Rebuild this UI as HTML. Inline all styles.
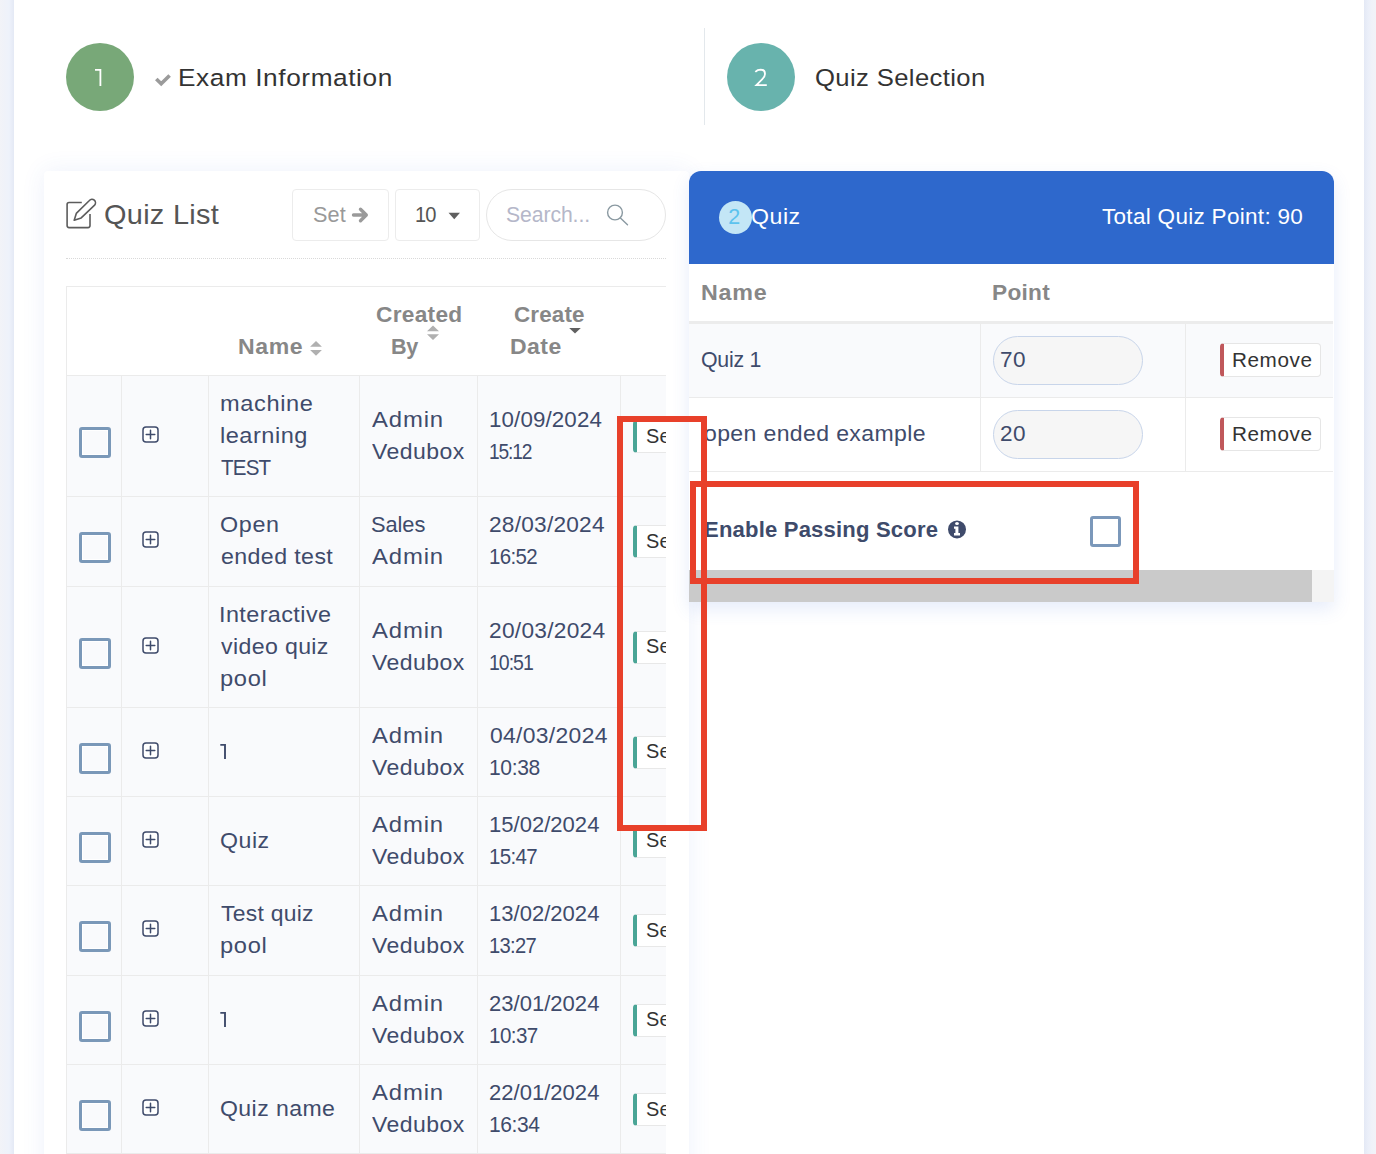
<!DOCTYPE html>
<html><head><meta charset="utf-8"><style>
html,body{margin:0;padding:0}
body{width:1376px;height:1154px;position:relative;overflow:hidden;background:#edf0f8;font-family:"Liberation Sans",sans-serif}
.t{position:absolute;white-space:nowrap;transform-origin:0 0}
</style></head><body>
<div style="position:absolute;left:14px;top:0;width:1350px;height:1154px;background:#fff"></div>
<div style="position:absolute;left:1364px;top:0;width:12px;height:1154px;background:linear-gradient(90deg,#e4e9f5 0px,#ebeff9 4px,#f0f2f9 8px,#f2f3f8 12px)"></div>
<div style="position:absolute;left:0;top:0;width:14px;height:1154px;background:linear-gradient(90deg,#f2f3f8 0px,#f0f2f9 4px,#eef2fb 9px,#e4e9f5 14px)"></div>
<div style="position:absolute;left:66px;top:43px;width:68px;height:68px;border-radius:50%;background:#78a878"></div>
<div style="position:absolute;left:727px;top:43px;width:68px;height:68px;border-radius:50%;background:#68b3ad"></div>
<div style="position:absolute;left:704px;top:28px;width:1px;height:97px;background:#e3e8ec"></div>
<svg style="position:absolute;left:90px;top:64px" width="20" height="26" viewBox="90 64 20 26"><path d="M95 69.9 H100.4 V86" fill="none" stroke="#fff" stroke-width="1.8"/></svg>
<svg style="position:absolute;left:750px;top:64px" width="20" height="26" viewBox="750 64 20 26"><path d="M755.3 71.8 Q757.6 69.6 760.6 69.6 Q765 69.7 765 73.9 Q765 76.6 762.1 79.4 L756.4 85.1 H766.8" fill="none" stroke="#fff" stroke-width="1.8" stroke-linejoin="miter"/></svg>
<svg style="position:absolute;left:150px;top:68px" width="26" height="24" viewBox="150 68 26 24"><polyline points="156.3,78.9 161.2,83.8 169.6,75.4" fill="none" stroke="#9b9b9b" stroke-width="3.6"/></svg>
<div style="position:absolute;left:44px;top:171px;width:645px;height:1100px;background:#fff;border-radius:4px;box-shadow:0 0 24px rgba(60,105,215,0.09)"></div>
<svg style="position:absolute;left:60px;top:194px" width="40" height="40" viewBox="0 0 40 40"><path d="M21.8 8.5 H9.1 Q7.1 8.5 7.1 10.5 V31.6 Q7.1 33.6 9.1 33.6 H28 Q30 33.6 30 31.6 V20.1" fill="none" stroke="#5c5c5c" stroke-width="1.6"/><path d="M14.2 26.3 L16.3 19.4 L29.4 6.5 A3.1 3.1 0 0 1 34.6 11.1 L21.2 23.9 Z" fill="none" stroke="#5c5c5c" stroke-width="1.6" stroke-linejoin="round"/></svg>
<div style="position:absolute;left:292px;top:189px;width:95px;height:50px;border:1px solid #ececec;border-radius:4px;background:#fff"></div>
<svg style="position:absolute;left:351px;top:205px" width="20" height="20" viewBox="0 0 20 20"><path d="M2.5 10 H14.5 M9.5 4.2 L15.3 10 L9.5 15.8" fill="none" stroke="#9a9a9a" stroke-width="3.4" stroke-linecap="round" stroke-linejoin="round"/></svg>
<div style="position:absolute;left:395px;top:189px;width:83px;height:50px;border:1px solid #ececec;border-radius:4px;background:#fff"></div>
<svg style="position:absolute;left:446px;top:210px" width="16" height="12" viewBox="446 210 16 12"><path d="M448.5 212.7 H460 L454.25 219.2 Z" fill="#5f5f5f"/></svg>
<div style="position:absolute;left:486px;top:189px;width:178px;height:50px;border:1px solid #e6e6e6;border-radius:26px;background:#fff"></div>
<svg style="position:absolute;left:600px;top:198px" width="34" height="34" viewBox="600 198 34 34"><circle cx="615" cy="212.5" r="7.4" fill="none" stroke="#8a99a1" stroke-width="1.4"/><path d="M620.4 218 L627.5 224.8" stroke="#8a99a1" stroke-width="1.4" stroke-linecap="round"/></svg>
<div style="position:absolute;left:66px;top:258px;width:600px;height:0;border-top:1px dotted #d9d9d9"></div>
<div style="position:absolute;left:66px;top:286px;width:600px;height:900px;overflow:hidden">
<div style="position:absolute;left:0;top:0;width:700px;height:90px;background:#fff;border-top:1px solid #ebebeb;border-left:1px solid #ebebeb;box-sizing:border-box"></div>
<div style="position:absolute;left:0;top:89px;width:700px;height:121px;background:#f9fafc;border-top:1px solid #ebebeb;border-left:1px solid #ebebeb;box-sizing:border-box"></div>
<div style="position:absolute;left:0;top:210px;width:700px;height:90px;background:#f9fafc;border-top:1px solid #ebebeb;border-left:1px solid #ebebeb;box-sizing:border-box"></div>
<div style="position:absolute;left:0;top:300px;width:700px;height:121px;background:#f9fafc;border-top:1px solid #ebebeb;border-left:1px solid #ebebeb;box-sizing:border-box"></div>
<div style="position:absolute;left:0;top:421px;width:700px;height:89px;background:#f9fafc;border-top:1px solid #ebebeb;border-left:1px solid #ebebeb;box-sizing:border-box"></div>
<div style="position:absolute;left:0;top:510px;width:700px;height:89px;background:#f9fafc;border-top:1px solid #ebebeb;border-left:1px solid #ebebeb;box-sizing:border-box"></div>
<div style="position:absolute;left:0;top:599px;width:700px;height:90px;background:#f9fafc;border-top:1px solid #ebebeb;border-left:1px solid #ebebeb;box-sizing:border-box"></div>
<div style="position:absolute;left:0;top:689px;width:700px;height:89px;background:#f9fafc;border-top:1px solid #ebebeb;border-left:1px solid #ebebeb;box-sizing:border-box"></div>
<div style="position:absolute;left:0;top:778px;width:700px;height:90px;background:#f9fafc;border-top:1px solid #ebebeb;border-left:1px solid #ebebeb;box-sizing:border-box"></div>
<div style="position:absolute;left:0;top:867px;width:700px;height:1px;background:#ebebeb"></div>
<div style="position:absolute;left:55px;top:89px;width:1px;height:800px;background:#ebebeb"></div>
<div style="position:absolute;left:142px;top:89px;width:1px;height:800px;background:#ebebeb"></div>
<div style="position:absolute;left:293px;top:89px;width:1px;height:800px;background:#ebebeb"></div>
<div style="position:absolute;left:411px;top:89px;width:1px;height:800px;background:#ebebeb"></div>
<div style="position:absolute;left:554px;top:89px;width:1px;height:800px;background:#ebebeb"></div>
<div style="position:absolute;left:13px;top:141.0px;width:32px;height:31px;box-sizing:border-box;border:3px solid #7a98b8;border-radius:3px;background:transparent;box-shadow:inset 0 0 0 1px #fff"></div>
<svg style="position:absolute;left:75px;top:139.10000000000002px" width="19" height="19" viewBox="0 0 19 19"><rect x="2" y="2" width="15" height="15" rx="3" fill="#fff" stroke="#3f4b6b" stroke-width="1.5"/><path d="M9.5 5.2 V13.8 M5.2 9.5 H13.8" stroke="#3f4b6b" stroke-width="1.5" stroke-linecap="round"/></svg>
<div style="position:absolute;left:567px;top:134.0px;width:80px;height:33px;box-sizing:border-box;border:1px solid #e8e8e8;border-left:4px solid #4aa596;border-radius:4px;background:#fff"></div>
<div style="position:absolute;left:13px;top:246.0px;width:32px;height:31px;box-sizing:border-box;border:3px solid #7a98b8;border-radius:3px;background:transparent;box-shadow:inset 0 0 0 1px #fff"></div>
<svg style="position:absolute;left:75px;top:244.10000000000002px" width="19" height="19" viewBox="0 0 19 19"><rect x="2" y="2" width="15" height="15" rx="3" fill="#fff" stroke="#3f4b6b" stroke-width="1.5"/><path d="M9.5 5.2 V13.8 M5.2 9.5 H13.8" stroke="#3f4b6b" stroke-width="1.5" stroke-linecap="round"/></svg>
<div style="position:absolute;left:567px;top:239.0px;width:80px;height:33px;box-sizing:border-box;border:1px solid #e8e8e8;border-left:4px solid #4aa596;border-radius:4px;background:#fff"></div>
<div style="position:absolute;left:13px;top:351.5px;width:32px;height:31px;box-sizing:border-box;border:3px solid #7a98b8;border-radius:3px;background:transparent;box-shadow:inset 0 0 0 1px #fff"></div>
<svg style="position:absolute;left:75px;top:349.6px" width="19" height="19" viewBox="0 0 19 19"><rect x="2" y="2" width="15" height="15" rx="3" fill="#fff" stroke="#3f4b6b" stroke-width="1.5"/><path d="M9.5 5.2 V13.8 M5.2 9.5 H13.8" stroke="#3f4b6b" stroke-width="1.5" stroke-linecap="round"/></svg>
<div style="position:absolute;left:567px;top:344.5px;width:80px;height:33px;box-sizing:border-box;border:1px solid #e8e8e8;border-left:4px solid #4aa596;border-radius:4px;background:#fff"></div>
<div style="position:absolute;left:13px;top:456.5px;width:32px;height:31px;box-sizing:border-box;border:3px solid #7a98b8;border-radius:3px;background:transparent;box-shadow:inset 0 0 0 1px #fff"></div>
<svg style="position:absolute;left:75px;top:454.6px" width="19" height="19" viewBox="0 0 19 19"><rect x="2" y="2" width="15" height="15" rx="3" fill="#fff" stroke="#3f4b6b" stroke-width="1.5"/><path d="M9.5 5.2 V13.8 M5.2 9.5 H13.8" stroke="#3f4b6b" stroke-width="1.5" stroke-linecap="round"/></svg>
<div style="position:absolute;left:567px;top:449.5px;width:80px;height:33px;box-sizing:border-box;border:1px solid #e8e8e8;border-left:4px solid #4aa596;border-radius:4px;background:#fff"></div>
<div style="position:absolute;left:13px;top:545.5px;width:32px;height:31px;box-sizing:border-box;border:3px solid #7a98b8;border-radius:3px;background:transparent;box-shadow:inset 0 0 0 1px #fff"></div>
<svg style="position:absolute;left:75px;top:543.6px" width="19" height="19" viewBox="0 0 19 19"><rect x="2" y="2" width="15" height="15" rx="3" fill="#fff" stroke="#3f4b6b" stroke-width="1.5"/><path d="M9.5 5.2 V13.8 M5.2 9.5 H13.8" stroke="#3f4b6b" stroke-width="1.5" stroke-linecap="round"/></svg>
<div style="position:absolute;left:567px;top:538.5px;width:80px;height:33px;box-sizing:border-box;border:1px solid #e8e8e8;border-left:4px solid #4aa596;border-radius:4px;background:#fff"></div>
<div style="position:absolute;left:13px;top:635.0px;width:32px;height:31px;box-sizing:border-box;border:3px solid #7a98b8;border-radius:3px;background:transparent;box-shadow:inset 0 0 0 1px #fff"></div>
<svg style="position:absolute;left:75px;top:633.1px" width="19" height="19" viewBox="0 0 19 19"><rect x="2" y="2" width="15" height="15" rx="3" fill="#fff" stroke="#3f4b6b" stroke-width="1.5"/><path d="M9.5 5.2 V13.8 M5.2 9.5 H13.8" stroke="#3f4b6b" stroke-width="1.5" stroke-linecap="round"/></svg>
<div style="position:absolute;left:567px;top:628.0px;width:80px;height:33px;box-sizing:border-box;border:1px solid #e8e8e8;border-left:4px solid #4aa596;border-radius:4px;background:#fff"></div>
<div style="position:absolute;left:13px;top:724.5px;width:32px;height:31px;box-sizing:border-box;border:3px solid #7a98b8;border-radius:3px;background:transparent;box-shadow:inset 0 0 0 1px #fff"></div>
<svg style="position:absolute;left:75px;top:722.6px" width="19" height="19" viewBox="0 0 19 19"><rect x="2" y="2" width="15" height="15" rx="3" fill="#fff" stroke="#3f4b6b" stroke-width="1.5"/><path d="M9.5 5.2 V13.8 M5.2 9.5 H13.8" stroke="#3f4b6b" stroke-width="1.5" stroke-linecap="round"/></svg>
<div style="position:absolute;left:567px;top:717.5px;width:80px;height:33px;box-sizing:border-box;border:1px solid #e8e8e8;border-left:4px solid #4aa596;border-radius:4px;background:#fff"></div>
<div style="position:absolute;left:13px;top:814.0px;width:32px;height:31px;box-sizing:border-box;border:3px solid #7a98b8;border-radius:3px;background:transparent;box-shadow:inset 0 0 0 1px #fff"></div>
<svg style="position:absolute;left:75px;top:812.0999999999999px" width="19" height="19" viewBox="0 0 19 19"><rect x="2" y="2" width="15" height="15" rx="3" fill="#fff" stroke="#3f4b6b" stroke-width="1.5"/><path d="M9.5 5.2 V13.8 M5.2 9.5 H13.8" stroke="#3f4b6b" stroke-width="1.5" stroke-linecap="round"/></svg>
<div style="position:absolute;left:567px;top:807.0px;width:80px;height:33px;box-sizing:border-box;border:1px solid #e8e8e8;border-left:4px solid #4aa596;border-radius:4px;background:#fff"></div>
<svg style="position:absolute;left:234px;top:44px" width="30" height="40" viewBox="300 330 30 40"><path d="M310.1 346.8 H321.9 L316 341.1 Z M310.1 350.1 H321.9 L316 355.8 Z" fill="#b0b0b0"/></svg>
<svg style="position:absolute;left:354px;top:34px" width="30" height="30" viewBox="420 320 30 30"><path d="M427 331.2 H439 L433 325.5 Z M427 334.3 H439 L433 340 Z" fill="#b0b0b0"/></svg>
<svg style="position:absolute;left:494px;top:34px" width="30" height="20" viewBox="560 320 30 20"><path d="M569.2 328.1 H580.8 L575 333.6 Z" fill="#606060"/></svg>
<div style="position:absolute;left:-66px;top:-286px;width:1376px;height:1154px">
<div class="t" style="left:645.80px;top:427.00px;font-size:19.5px;line-height:19.5px;font-weight:400;color:#333;letter-spacing:0.31px;transform:scaleX(1.0209)">Se</div>
<div class="t" style="left:645.80px;top:532.00px;font-size:19.5px;line-height:19.5px;font-weight:400;color:#333;letter-spacing:0.31px;transform:scaleX(1.0209)">Se</div>
<div class="t" style="left:645.80px;top:637.00px;font-size:19.5px;line-height:19.5px;font-weight:400;color:#333;letter-spacing:0.31px;transform:scaleX(1.0209)">Se</div>
<div class="t" style="left:645.80px;top:742.00px;font-size:19.5px;line-height:19.5px;font-weight:400;color:#333;letter-spacing:0.31px;transform:scaleX(1.0209)">Se</div>
<div class="t" style="left:645.80px;top:831.00px;font-size:19.5px;line-height:19.5px;font-weight:400;color:#333;letter-spacing:0.31px;transform:scaleX(1.0209)">Se</div>
<div class="t" style="left:645.80px;top:921.00px;font-size:19.5px;line-height:19.5px;font-weight:400;color:#333;letter-spacing:0.31px;transform:scaleX(1.0209)">Se</div>
<div class="t" style="left:645.80px;top:1010.00px;font-size:19.5px;line-height:19.5px;font-weight:400;color:#333;letter-spacing:0.31px;transform:scaleX(1.0209)">Se</div>
<div class="t" style="left:645.80px;top:1100.00px;font-size:19.5px;line-height:19.5px;font-weight:400;color:#333;letter-spacing:0.31px;transform:scaleX(1.0209)">Se</div>
</div>
</div>
<div style="position:absolute;left:689px;top:171px;width:645px;height:431px;background:#fff;border-radius:12px 12px 0 0;box-shadow:0 7px 18px rgba(60,105,215,0.13)"></div>
<div style="position:absolute;left:689px;top:171px;width:645px;height:93px;background:#2e68cc;border-radius:12px 12px 0 0"></div>
<div style="position:absolute;left:719px;top:201px;width:33px;height:33px;border-radius:50%;background:#c3e6f6"></div>
<div style="position:absolute;left:689px;top:321px;width:644px;height:3px;background:#ececec"></div>
<div style="position:absolute;left:689px;top:324px;width:644px;height:74px;background:#f9fafc;border-bottom:1px solid #ebebeb;box-sizing:border-box"></div>
<div style="position:absolute;left:689px;top:398px;width:644px;height:73.5px;background:#fff;border-bottom:1px solid #ebebeb;box-sizing:border-box"></div>
<div style="position:absolute;left:980px;top:324px;width:1px;height:147px;background:#ebebeb"></div>
<div style="position:absolute;left:1185px;top:324px;width:1px;height:147px;background:#ebebeb"></div>
<div style="position:absolute;left:993px;top:336px;width:150px;height:49px;box-sizing:border-box;border:1px solid #c8d5ea;border-radius:25px;background:#f6f6f6"></div>
<div style="position:absolute;left:993px;top:410px;width:150px;height:49px;box-sizing:border-box;border:1px solid #c8d5ea;border-radius:25px;background:#f6f6f6"></div>
<div style="position:absolute;left:1220px;top:343.3px;width:101px;height:34px;box-sizing:border-box;border:1px solid #e6e6e6;border-left:4px solid #c0585b;border-radius:4px;background:#fff"></div>
<div style="position:absolute;left:1220px;top:417.3px;width:101px;height:34px;box-sizing:border-box;border:1px solid #e6e6e6;border-left:4px solid #c0585b;border-radius:4px;background:#fff"></div>
<div style="position:absolute;left:1090px;top:516px;width:31px;height:31px;box-sizing:border-box;border:3px solid #7b98ba;border-radius:3px;background:#fff"></div>
<svg style="position:absolute;left:946px;top:518px" width="22" height="22" viewBox="946 518 22 22"><circle cx="957" cy="529.4" r="9" fill="#3f4b6b"/><ellipse cx="957" cy="523.5" rx="1.9" ry="1.5" fill="#fff"/><path d="M954 526.4 H958.4 V533 H960 V535.6 H954 V533 H955.4 V528.8 H954 Z" fill="#fff"/></svg>
<div style="position:absolute;left:689px;top:570px;width:623px;height:32px;background:#cacaca"></div>
<div style="position:absolute;left:1312px;top:570px;width:22px;height:32px;background:#f4f4f4"></div>
<div class="t" style="left:177.86px;top:66.00px;font-size:24.5px;line-height:24.5px;font-weight:400;color:#333;letter-spacing:0.55px;transform:scaleX(1.0701)">Exam Information</div>
<div class="t" style="left:815.15px;top:66.00px;font-size:24.5px;line-height:24.5px;font-weight:400;color:#333;letter-spacing:0.36px;transform:scaleX(1.0466)">Quiz Selection</div>
<div class="t" style="left:103.57px;top:201.00px;font-size:28px;line-height:28px;font-weight:400;color:#555;letter-spacing:0.28px;transform:scaleX(1.0325)">Quiz List</div>
<div class="t" style="left:313.30px;top:205.00px;font-size:21.5px;line-height:21.5px;font-weight:400;color:#999;letter-spacing:0.08px;transform:scaleX(1.0075)">Set</div>
<div class="t" style="left:414.87px;top:205.00px;font-size:21.5px;line-height:21.5px;font-weight:400;color:#555;letter-spacing:-1.10px;transform:scaleX(0.9332)">10</div>
<div class="t" style="left:505.90px;top:205.00px;font-size:21.5px;line-height:21.5px;font-weight:400;color:#b5b7c9;letter-spacing:-0.10px;transform:scaleX(0.9861)">Search...</div>
<div class="t" style="left:237.55px;top:336.00px;font-size:22px;line-height:22px;font-weight:700;color:#878787;letter-spacing:0.60px;transform:scaleX(1.0482)">Name</div>
<div class="t" style="left:375.60px;top:304.00px;font-size:22px;line-height:22px;font-weight:700;color:#878787;letter-spacing:0.27px;transform:scaleX(1.0314)">Created</div>
<div class="t" style="left:390.62px;top:336.00px;font-size:22px;line-height:22px;font-weight:700;color:#878787;letter-spacing:-0.36px;transform:scaleX(0.9809)">By</div>
<div class="t" style="left:513.70px;top:304.00px;font-size:22px;line-height:22px;font-weight:700;color:#878787;letter-spacing:0.16px;transform:scaleX(1.0181)">Create</div>
<div class="t" style="left:509.66px;top:336.00px;font-size:22px;line-height:22px;font-weight:700;color:#878787;letter-spacing:0.44px;transform:scaleX(1.0446)">Date</div>
<div class="t" style="left:220.23px;top:393.00px;font-size:22px;line-height:22px;font-weight:400;color:#3f4b6b;letter-spacing:0.60px;transform:scaleX(1.0709)">machine</div>
<div class="t" style="left:220.23px;top:425.00px;font-size:22px;line-height:22px;font-weight:400;color:#3f4b6b;letter-spacing:0.48px;transform:scaleX(1.0707)">learning</div>
<div class="t" style="left:221.30px;top:457.00px;font-size:22px;line-height:22px;font-weight:400;color:#3f4b6b;letter-spacing:-0.87px;transform:scaleX(0.9345)">TEST</div>
<div class="t" style="left:372.20px;top:409.00px;font-size:22px;line-height:22px;font-weight:400;color:#3f4b6b;letter-spacing:0.80px;transform:scaleX(1.0852)">Admin</div>
<div class="t" style="left:372.20px;top:441.00px;font-size:22px;line-height:22px;font-weight:400;color:#3f4b6b;letter-spacing:0.42px;transform:scaleX(1.0460)">Vedubox</div>
<div class="t" style="left:489.18px;top:409.00px;font-size:22px;line-height:22px;font-weight:400;color:#3f4b6b;letter-spacing:0.12px;transform:scaleX(1.0150)">10/09/2024</div>
<div class="t" style="left:489.33px;top:441.00px;font-size:22px;line-height:22px;font-weight:400;color:#3f4b6b;letter-spacing:-1.33px;transform:scaleX(0.8705)">15:12</div>
<div class="t" style="left:220.24px;top:514.00px;font-size:22px;line-height:22px;font-weight:400;color:#3f4b6b;letter-spacing:0.64px;transform:scaleX(1.0595)">Open</div>
<div class="t" style="left:221.30px;top:546.00px;font-size:22px;line-height:22px;font-weight:400;color:#3f4b6b;letter-spacing:0.38px;transform:scaleX(1.0530)">ended test</div>
<div class="t" style="left:371.21px;top:514.00px;font-size:22px;line-height:22px;font-weight:400;color:#3f4b6b;letter-spacing:-0.07px;transform:scaleX(0.9919)">Sales</div>
<div class="t" style="left:372.20px;top:546.00px;font-size:22px;line-height:22px;font-weight:400;color:#3f4b6b;letter-spacing:0.80px;transform:scaleX(1.0852)">Admin</div>
<div class="t" style="left:489.17px;top:514.00px;font-size:22px;line-height:22px;font-weight:400;color:#3f4b6b;letter-spacing:0.23px;transform:scaleX(1.0299)">28/03/2024</div>
<div class="t" style="left:489.27px;top:546.00px;font-size:22px;line-height:22px;font-weight:400;color:#3f4b6b;letter-spacing:-0.68px;transform:scaleX(0.9296)">16:52</div>
<div class="t" style="left:219.17px;top:604.00px;font-size:22px;line-height:22px;font-weight:400;color:#3f4b6b;letter-spacing:0.39px;transform:scaleX(1.0625)">Interactive</div>
<div class="t" style="left:221.30px;top:636.00px;font-size:22px;line-height:22px;font-weight:400;color:#3f4b6b;letter-spacing:0.35px;transform:scaleX(1.0510)">video quiz</div>
<div class="t" style="left:220.22px;top:668.00px;font-size:22px;line-height:22px;font-weight:400;color:#3f4b6b;letter-spacing:0.62px;transform:scaleX(1.0755)">pool</div>
<div class="t" style="left:372.20px;top:620.00px;font-size:22px;line-height:22px;font-weight:400;color:#3f4b6b;letter-spacing:0.80px;transform:scaleX(1.0852)">Admin</div>
<div class="t" style="left:372.20px;top:652.00px;font-size:22px;line-height:22px;font-weight:400;color:#3f4b6b;letter-spacing:0.42px;transform:scaleX(1.0460)">Vedubox</div>
<div class="t" style="left:489.17px;top:620.00px;font-size:22px;line-height:22px;font-weight:400;color:#3f4b6b;letter-spacing:0.26px;transform:scaleX(1.0327)">20/03/2024</div>
<div class="t" style="left:489.31px;top:652.00px;font-size:22px;line-height:22px;font-weight:400;color:#3f4b6b;letter-spacing:-1.14px;transform:scaleX(0.8872)">10:51</div>
<div class="t" style="left:372.20px;top:725.00px;font-size:22px;line-height:22px;font-weight:400;color:#3f4b6b;letter-spacing:0.80px;transform:scaleX(1.0852)">Admin</div>
<div class="t" style="left:372.20px;top:757.00px;font-size:22px;line-height:22px;font-weight:400;color:#3f4b6b;letter-spacing:0.42px;transform:scaleX(1.0460)">Vedubox</div>
<div class="t" style="left:490.20px;top:725.00px;font-size:22px;line-height:22px;font-weight:400;color:#3f4b6b;letter-spacing:0.31px;transform:scaleX(1.0400)">04/03/2024</div>
<div class="t" style="left:489.24px;top:757.00px;font-size:22px;line-height:22px;font-weight:400;color:#3f4b6b;letter-spacing:-0.40px;transform:scaleX(0.9574)">10:38</div>
<div class="t" style="left:220.25px;top:830.00px;font-size:22px;line-height:22px;font-weight:400;color:#3f4b6b;letter-spacing:0.48px;transform:scaleX(1.0522)">Quiz</div>
<div class="t" style="left:372.20px;top:814.00px;font-size:22px;line-height:22px;font-weight:400;color:#3f4b6b;letter-spacing:0.80px;transform:scaleX(1.0852)">Admin</div>
<div class="t" style="left:372.20px;top:846.00px;font-size:22px;line-height:22px;font-weight:400;color:#3f4b6b;letter-spacing:0.42px;transform:scaleX(1.0460)">Vedubox</div>
<div class="t" style="left:489.20px;top:814.00px;font-size:22px;line-height:22px;font-weight:400;color:#3f4b6b;letter-spacing:0.01px;transform:scaleX(1.0018)">15/02/2024</div>
<div class="t" style="left:489.27px;top:846.00px;font-size:22px;line-height:22px;font-weight:400;color:#3f4b6b;letter-spacing:-0.67px;transform:scaleX(0.9307)">15:47</div>
<div class="t" style="left:221.30px;top:903.00px;font-size:22px;line-height:22px;font-weight:400;color:#3f4b6b;letter-spacing:0.27px;transform:scaleX(1.0397)">Test quiz</div>
<div class="t" style="left:220.22px;top:935.00px;font-size:22px;line-height:22px;font-weight:400;color:#3f4b6b;letter-spacing:0.62px;transform:scaleX(1.0755)">pool</div>
<div class="t" style="left:372.20px;top:903.00px;font-size:22px;line-height:22px;font-weight:400;color:#3f4b6b;letter-spacing:0.80px;transform:scaleX(1.0852)">Admin</div>
<div class="t" style="left:372.20px;top:935.00px;font-size:22px;line-height:22px;font-weight:400;color:#3f4b6b;letter-spacing:0.42px;transform:scaleX(1.0460)">Vedubox</div>
<div class="t" style="left:489.20px;top:903.00px;font-size:22px;line-height:22px;font-weight:400;color:#3f4b6b;letter-spacing:0.01px;transform:scaleX(1.0018)">13/02/2024</div>
<div class="t" style="left:489.28px;top:935.00px;font-size:22px;line-height:22px;font-weight:400;color:#3f4b6b;letter-spacing:-0.80px;transform:scaleX(0.9184)">13:27</div>
<div class="t" style="left:372.20px;top:993.00px;font-size:22px;line-height:22px;font-weight:400;color:#3f4b6b;letter-spacing:0.80px;transform:scaleX(1.0852)">Admin</div>
<div class="t" style="left:372.20px;top:1025.00px;font-size:22px;line-height:22px;font-weight:400;color:#3f4b6b;letter-spacing:0.42px;transform:scaleX(1.0460)">Vedubox</div>
<div class="t" style="left:489.20px;top:993.00px;font-size:22px;line-height:22px;font-weight:400;color:#3f4b6b;letter-spacing:0.01px;transform:scaleX(1.0018)">23/01/2024</div>
<div class="t" style="left:489.26px;top:1025.00px;font-size:22px;line-height:22px;font-weight:400;color:#3f4b6b;letter-spacing:-0.61px;transform:scaleX(0.9362)">10:37</div>
<div class="t" style="left:220.25px;top:1098.00px;font-size:22px;line-height:22px;font-weight:400;color:#3f4b6b;letter-spacing:0.40px;transform:scaleX(1.0483)">Quiz name</div>
<div class="t" style="left:372.20px;top:1082.00px;font-size:22px;line-height:22px;font-weight:400;color:#3f4b6b;letter-spacing:0.80px;transform:scaleX(1.0852)">Admin</div>
<div class="t" style="left:372.20px;top:1114.00px;font-size:22px;line-height:22px;font-weight:400;color:#3f4b6b;letter-spacing:0.42px;transform:scaleX(1.0460)">Vedubox</div>
<div class="t" style="left:489.20px;top:1082.00px;font-size:22px;line-height:22px;font-weight:400;color:#3f4b6b;letter-spacing:0.01px;transform:scaleX(1.0018)">22/01/2024</div>
<div class="t" style="left:489.24px;top:1114.00px;font-size:22px;line-height:22px;font-weight:400;color:#3f4b6b;letter-spacing:-0.42px;transform:scaleX(0.9552)">16:34</div>
<div class="t" style="left:751.25px;top:206.00px;font-size:22px;line-height:22px;font-weight:400;color:#fff;letter-spacing:0.48px;transform:scaleX(1.0522)">Quiz</div>
<div class="t" style="left:1101.80px;top:207.00px;font-size:21.5px;line-height:21.5px;font-weight:400;color:#fff;letter-spacing:0.29px;transform:scaleX(1.0464)">Total Quiz Point: 90</div>
<div class="t" style="left:728.30px;top:207.00px;font-size:21.5px;line-height:21.5px;font-weight:300;color:#5cc3ee;letter-spacing:0.00px;transform:scaleX(1.0000)">2</div>
<div class="t" style="left:700.94px;top:282.00px;font-size:22px;line-height:22px;font-weight:700;color:#878787;letter-spacing:0.71px;transform:scaleX(1.0574)">Name</div>
<div class="t" style="left:992.47px;top:282.00px;font-size:22px;line-height:22px;font-weight:700;color:#878787;letter-spacing:0.27px;transform:scaleX(1.0300)">Point</div>
<div class="t" style="left:701.33px;top:349.00px;font-size:22px;line-height:22px;font-weight:400;color:#3f4b6b;letter-spacing:-0.26px;transform:scaleX(0.9697)">Quiz 1</div>
<div class="t" style="left:703.50px;top:423.00px;font-size:22px;line-height:22px;font-weight:400;color:#3f4b6b;letter-spacing:0.36px;transform:scaleX(1.0466)">open ended example</div>
<div class="t" style="left:1000.47px;top:349.00px;font-size:22px;line-height:22px;font-weight:400;color:#3f4b6b;letter-spacing:0.39px;transform:scaleX(1.0258)">70</div>
<div class="t" style="left:1000.47px;top:423.00px;font-size:22px;line-height:22px;font-weight:400;color:#3f4b6b;letter-spacing:0.39px;transform:scaleX(1.0258)">20</div>
<div class="t" style="left:1232.04px;top:351.00px;font-size:19.5px;line-height:19.5px;font-weight:400;color:#333;letter-spacing:0.55px;transform:scaleX(1.0613)">Remove</div>
<div class="t" style="left:1232.04px;top:425.00px;font-size:19.5px;line-height:19.5px;font-weight:400;color:#333;letter-spacing:0.55px;transform:scaleX(1.0613)">Remove</div>
<div class="t" style="left:703.98px;top:520.00px;font-size:21.5px;line-height:21.5px;font-weight:700;color:#3e4b6b;letter-spacing:0.19px;transform:scaleX(1.0250)">Enable Passing Score</div>
<svg style="position:absolute;left:215px;top:739px" width="16" height="22" viewBox="215 739 16 22"><path d="M220.3 744.9 H225 V759" fill="none" stroke="#3f4b6b" stroke-width="1.9"/></svg>
<svg style="position:absolute;left:215px;top:1007px" width="16" height="22" viewBox="215 1007 16 22"><path d="M220.3 1012.9 H225 V1027" fill="none" stroke="#3f4b6b" stroke-width="1.9"/></svg>
<div style="position:absolute;left:617px;top:416px;width:90px;height:415px;box-sizing:border-box;border:6px solid #e8402a"></div>
<div style="position:absolute;left:690px;top:481px;width:449px;height:102.5px;box-sizing:border-box;border:6px solid #e8402a"></div>
</body></html>
